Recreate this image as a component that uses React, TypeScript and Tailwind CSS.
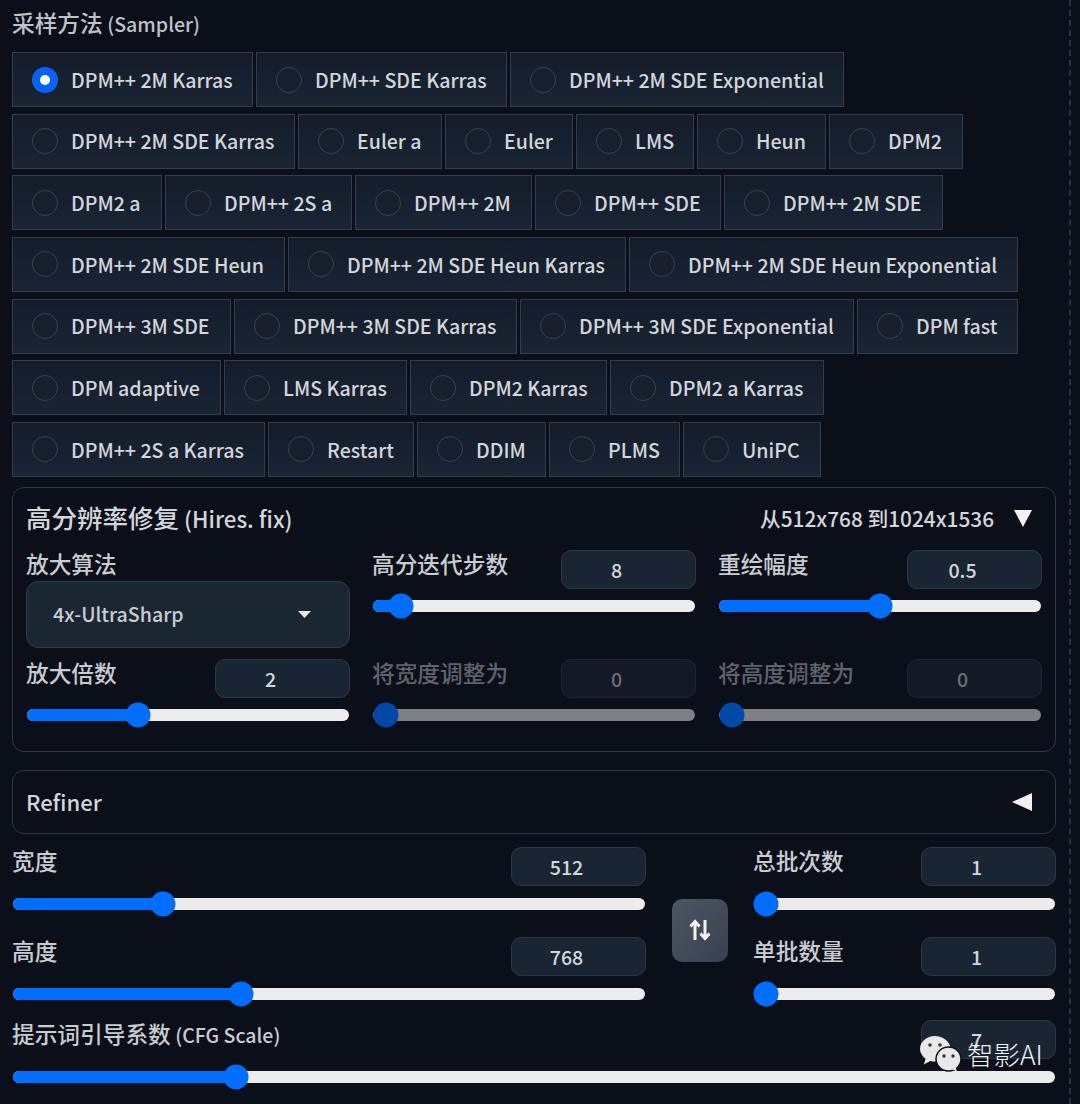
import type { ReactNode } from "react";

const rows = [
  [
    { label: "DPM++ 2M Karras", w: "w-[241px]", checked: true },
    { label: "DPM++ SDE Karras", w: "w-[251px]" },
    { label: "DPM++ 2M SDE Exponential", w: "w-[334px]" },
  ],
  [
    { label: "DPM++ 2M SDE Karras", w: "w-[283px]" },
    { label: "Euler a", w: "w-[144px]" },
    { label: "Euler", w: "w-[128px]" },
    { label: "LMS", w: "w-[118px]" },
    { label: "Heun", w: "w-[129px]" },
    { label: "DPM2", w: "w-[134px]" },
  ],
  [
    { label: "DPM2 a", w: "w-[150px]" },
    { label: "DPM++ 2S a", w: "w-[187px]" },
    { label: "DPM++ 2M", w: "w-[177px]" },
    { label: "DPM++ SDE", w: "w-[186px]" },
    { label: "DPM++ 2M SDE", w: "w-[219px]" },
  ],
  [
    { label: "DPM++ 2M SDE Heun", w: "w-[273px]" },
    { label: "DPM++ 2M SDE Heun Karras", w: "w-[338px]" },
    { label: "DPM++ 2M SDE Heun Exponential", w: "w-[389px]" },
  ],
  [
    { label: "DPM++ 3M SDE", w: "w-[219px]" },
    { label: "DPM++ 3M SDE Karras", w: "w-[283px]" },
    { label: "DPM++ 3M SDE Exponential", w: "w-[334px]" },
    { label: "DPM fast", w: "w-[161px]" },
  ],
  [
    { label: "DPM adaptive", w: "w-[209px]" },
    { label: "LMS Karras", w: "w-[183px]" },
    { label: "DPM2 Karras", w: "w-[197px]" },
    { label: "DPM2 a Karras", w: "w-[214px]" },
  ],
  [
    { label: "DPM++ 2S a Karras", w: "w-[253px]" },
    { label: "Restart", w: "w-[146px]" },
    { label: "DDIM", w: "w-[129px]" },
    { label: "PLMS", w: "w-[131px]" },
    { label: "UniPC", w: "w-[138px]" },
  ],
];

function Radio({ label, w, checked }: { label: string; w: string; checked?: boolean }) {
  return (
    <div className={`${w} h-[55px] flex items-center pl-[19px] gap-[13px] border border-[#323d4d] bg-gradient-to-b from-[#141c2a] to-[#1a2433]`}>
      {checked ? (
        <span className="w-[26px] h-[26px] rounded-full bg-[#0a62f5] flex items-center justify-center">
          <span className="w-[10px] h-[10px] rounded-full bg-white" />
        </span>
      ) : (
        <span className="w-[26px] h-[26px] rounded-full border border-[#384252] bg-[#171f2c]" />
      )}
      <span className="text-[19.6px] leading-none font-medium text-[#d3d6db] whitespace-nowrap">{label}</span>
    </div>
  );
}

function Slider({ pct, disabled }: { pct: number; disabled?: boolean }) {
  return (
    <div className={`relative h-[12px] mx-px rounded-full ${disabled ? "bg-[#7f8085]" : "bg-[#ececec]"}`}>
      {!disabled && (
        <div className="absolute left-0 top-0 h-full rounded-full bg-[#006fff]" style={{ width: `${pct}%` }} />
      )}
      <div
        className={`absolute top-1/2 -translate-y-1/2 -translate-x-1/2 w-[25px] h-[25px] rounded-full ${disabled ? "bg-[#0049a8]" : "bg-[#006fff]"}`}
        style={{ left: `${pct}%` }}
      />
    </div>
  );
}

function Cjk({ children }: { children: ReactNode }) {
  return <span className="text-[22.7px]">{children}</span>;
}

function SliderBlock({
  label,
  value,
  pct,
  disabled,
  loose,
}: {
  label: ReactNode;
  value: string;
  pct: number;
  disabled?: boolean;
  loose?: boolean;
}) {
  return (
    <div className="flex flex-col">
      <div className={`flex justify-between items-start h-[39px] ${loose ? "mb-[12px]" : "mb-[11px]"}`}>
        <span className={`text-[19.5px] leading-[30px] h-[30px] -mt-[1px] font-medium whitespace-nowrap ${disabled ? "text-[#5f636b]" : "text-[#c9ccd1]"}`}>{label}</span>
        <div
          className={`w-[135px] h-[39px] rounded-[10px] border flex items-center justify-center pr-[24px] text-[19.6px] font-medium ${
            disabled ? "bg-[#131a25] border-[#1e2632] text-[#6b7078]" : "bg-[#1a2533] border-[#2d3846] text-[#d3d6db]"
          }`}
        >
          {value}
        </div>
      </div>
      <Slider pct={pct} disabled={disabled} />
    </div>
  );
}

function Watermark() {
  return (
    <div className="absolute left-[920px] top-[1036px] flex items-center gap-[5px]">
      <svg width="42" height="37" viewBox="0 0 42 37">
        <path d="M15 0C6.700 0 0 5.700 0 12.800c0 4 2.200 7.600 5.600 10l-1.800 5.600 6.600-3.400c1.500.4 3 .6 4.600.6.600 0 1.200 0 1.800-.1 0 0 9-16 13.900-13.500C29.400 5 22.900 0 15 0z" fill="#e8e8e8" />
        <ellipse cx="28.500" cy="23" rx="12.500" ry="12" fill="#e8e8e8" stroke="#0b0f19" strokeWidth="1.500" />
        <path d="M32 33l5 3-1.500-5z" fill="#e8e8e8" />
        <circle cx="10" cy="9" r="1.800" fill="#333" />
        <circle cx="20" cy="9" r="1.800" fill="#333" />
        <circle cx="24" cy="20" r="1.700" fill="#333" />
        <circle cx="33" cy="20" r="1.700" fill="#333" />
      </svg>
      <span className="text-[26.5px] leading-none font-light text-[#f0f0f0] whitespace-nowrap -mt-[1px]">智影AI</span>
    </div>
  );
}

export default function App() {
  return (
    <div
      className="relative w-[1080px] h-[1104px] overflow-hidden bg-[#0b0f19]"
      style={{ fontFamily: '"Noto Sans CJK SC", "Noto Sans", sans-serif' }}
    >
      <div className="w-[1071px] h-full border-r-2 border-dashed border-[#2a3140] pl-[12px] pt-[9px]">
        <div className="text-[19.6px] leading-[28px] h-[29px] font-medium text-[#bfc3c9] mb-[14px]">
          <Cjk>采样方法</Cjk> (Sampler)
        </div>

        <div className="flex flex-col gap-[6.67px]">
          {rows.map((row, i) => (
            <div key={i} className="flex gap-[3px]">
              {row.map((r) => (
                <Radio key={r.label} {...r} />
              ))}
            </div>
          ))}
        </div>

        <div className="w-[1044px] h-[265px] mt-[10px] rounded-[12px] border border-[#303846] px-[13px] pt-[12px]">
          <div className="flex items-center justify-between h-[36px] mb-[14px]">
            <span className="text-[22.3px] leading-none font-medium text-[#d3d6db] -mt-[3px]">
              <span className="text-[25.5px]">高分辨率修复</span> (Hires. fix)
            </span>
            <div className="flex items-center gap-[19px] pr-[9px]">
              <span className="text-[20.8px] leading-none font-medium text-[#d3d6db]">从512x768 到1024x1536</span>
              <svg width="20" height="18" viewBox="0 0 20 18">
                <polygon points="1,1 19,1 10,18" fill="#f2f2f2" />
              </svg>
            </div>
          </div>

          <div className="grid grid-cols-[324px_324px_324px] gap-x-[22px] gap-y-[11px]">
            <div className="h-[98px] flex flex-col">
              <span className="text-[22.7px] leading-[30px] h-[30px] -mt-[1px] font-medium text-[#c9ccd1] mb-[2px]">放大算法</span>
              <div className="h-[67px] rounded-[12px] border border-[#323d4b] bg-[#1b2633] flex items-center justify-between pl-[26px] pr-[38px]">
                <span className="text-[19.6px] font-medium text-[#c9ccd1] -mt-[2px]">4x-UltraSharp</span>
                <svg width="13" height="7" viewBox="0 0 13 7">
                  <polygon points="0,0 13,0 6.500,7" fill="#e6e6e6" />
                </svg>
              </div>
            </div>
            <SliderBlock label={<Cjk>高分迭代步数</Cjk>} value="8" pct={8.700} />
            <SliderBlock label={<Cjk>重绘幅度</Cjk>} value="0.5" pct={50} />
            <SliderBlock label={<Cjk>放大倍数</Cjk>} value="2" pct={34.500} />
            <SliderBlock label={<Cjk>将宽度调整为</Cjk>} value="0" pct={4} disabled />
            <SliderBlock label={<Cjk>将高度调整为</Cjk>} value="0" pct={4} disabled />
          </div>
        </div>

        <div className="w-[1044px] h-[64px] mt-[18px] rounded-[12px] border border-[#303846] flex items-center justify-between pl-[13px] pr-[22px]">
          <span className="text-[22px] leading-none font-medium text-[#d3d6db] -mt-[2px]">Refiner</span>
          <svg width="21" height="18" viewBox="0 0 21 18">
            <polygon points="0,9 20,0 20,18" fill="#f2f2f2" />
          </svg>
        </div>

        <div className="flex mt-[13px] w-[1044px]">
          <div className="w-[634px] flex flex-col gap-[27px]">
            <SliderBlock label={<Cjk>宽度</Cjk>} value="512" pct={23.700} loose />
            <SliderBlock label={<Cjk>高度</Cjk>} value="768" pct={36} loose />
          </div>
          <div className="w-[56px] h-[63px] ml-[26px] mt-[52px] rounded-[10px] bg-gradient-to-br from-[#4b5563] to-[#374151] flex items-center justify-center">
            <svg width="22" height="22" viewBox="0 0 22 22" fill="none" stroke="#f2f2f2" strokeWidth="3">
              <path d="M6 21V3M1.500 7.500L6 2.500l4.500 5" />
              <path d="M16 1v18M11.500 14.500l4.500 5 4.500-5" />
            </svg>
          </div>
          <div className="w-[303px] ml-[25px] flex flex-col gap-[27px]">
            <SliderBlock label={<Cjk>总批次数</Cjk>} value="1" pct={4} loose />
            <SliderBlock label={<Cjk>单批数量</Cjk>} value="1" pct={4} loose />
          </div>
        </div>

        <div className="mt-[20px] w-[1044px]">
          <SliderBlock label={<><Cjk>提示词引导系数</Cjk> (CFG Scale)</>} value="7" pct={21.400} loose />
        </div>
      </div>

      <Watermark />
    </div>
  );
}
